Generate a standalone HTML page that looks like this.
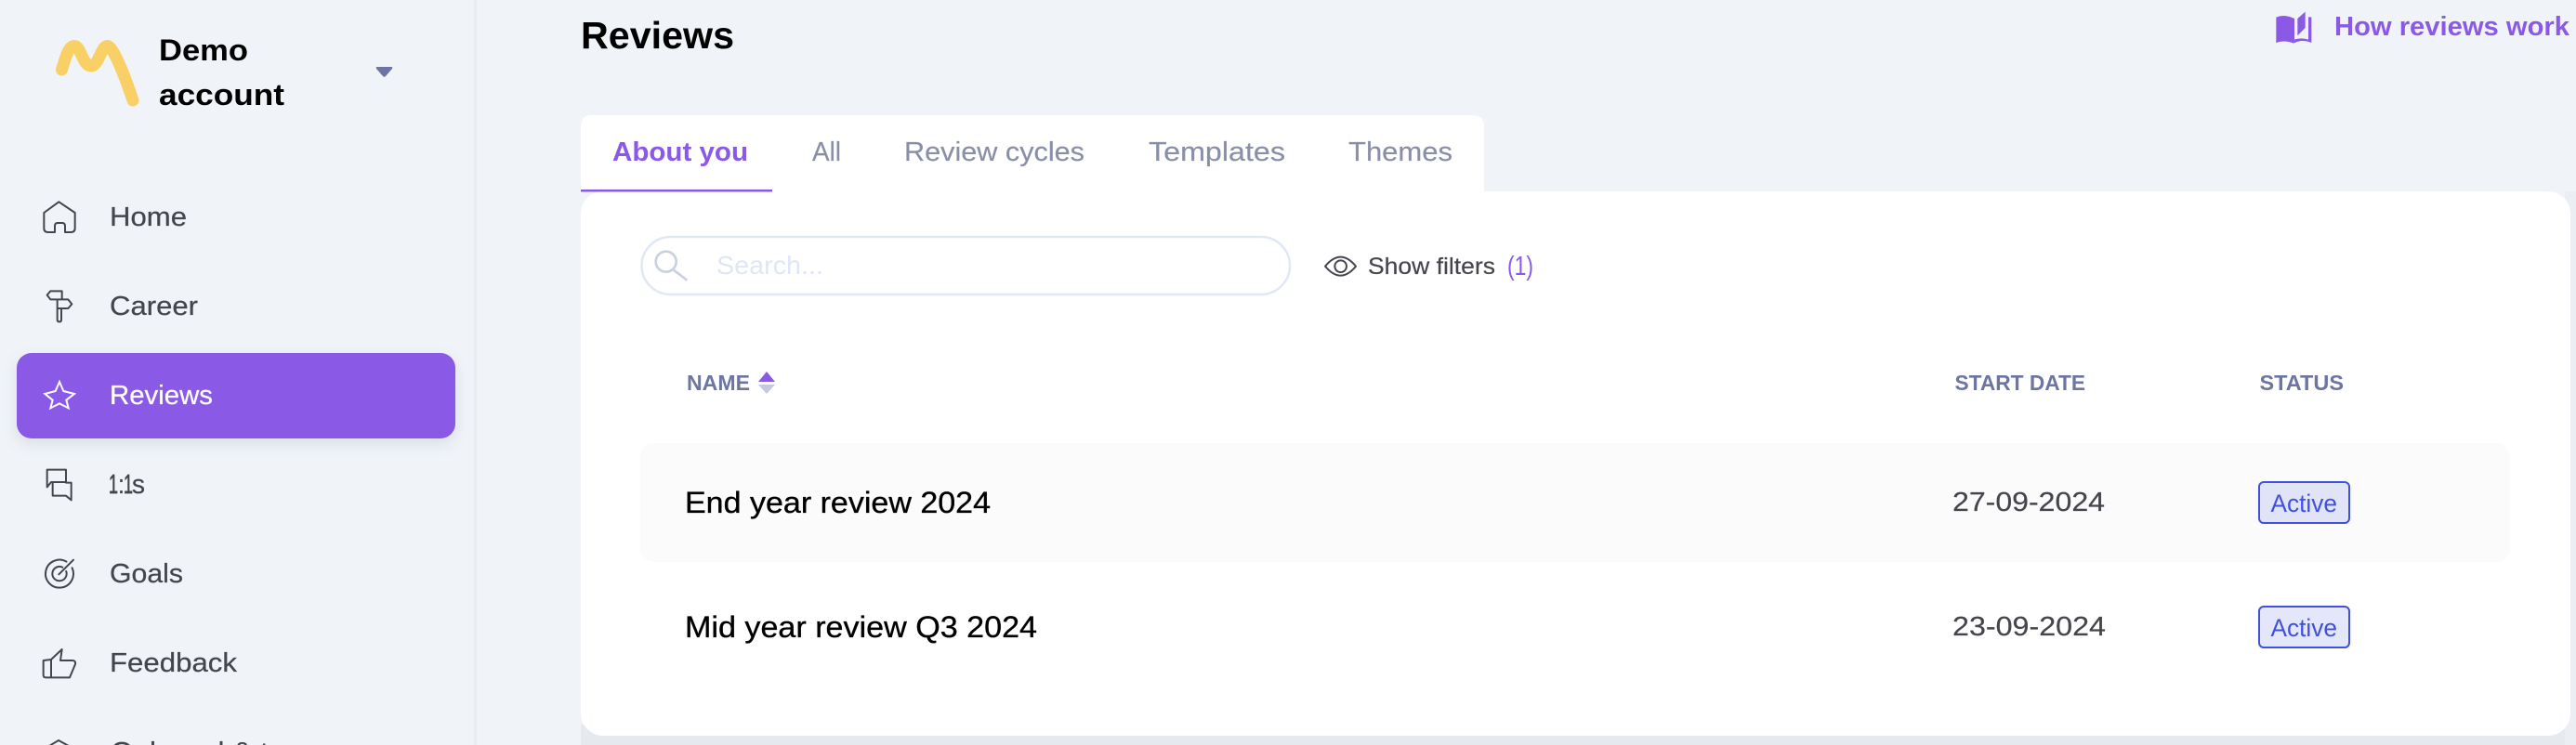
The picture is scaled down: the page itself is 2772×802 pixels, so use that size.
<!DOCTYPE html>
<html lang="en">
<head>
<meta charset="utf-8">
<title>Reviews</title>
<style>
html,body{margin:0;padding:0;background:#f0f4f8;width:2772px;height:802px;overflow:hidden}
svg{display:block;position:absolute;left:0;top:0}
text{font-family:"Liberation Sans",sans-serif}
.nav{font-size:29px;fill:#45464d;stroke:#45464d;stroke-width:.25px}
.tab{font-size:29px;fill:#8a8fa8;stroke:#8a8fa8;stroke-width:.2px}
.th{font-size:23px;font-weight:700;fill:#6c75a3}
.row{font-size:32px;fill:#000;stroke:#000;stroke-width:.35px}
.date{font-size:29px;fill:#45464d;stroke:#45464d;stroke-width:.2px}
.act{font-size:27px;fill:#3f51dd}
.ic{fill:none;stroke:#45464d;stroke-width:6;stroke-linejoin:round;stroke-linecap:round}
</style>
</head>
<body>
<svg width="2772" height="802" viewBox="0 0 2772 802" xmlns="http://www.w3.org/2000/svg">
  <rect width="2772" height="802" fill="#f0f4f8"/>

  <!-- sidebar -->
  <rect x="510" y="0" width="3" height="802" fill="#e8ecf0"/>
  <path d="M66.500 75C71 60 74 49.500 80 49.500C87 49.500 89 71 98 71C106 71 109 49.500 115.500 49.500C122 49.500 135 84 143 108" fill="none" stroke="#f9d065" stroke-width="13" stroke-linecap="round" stroke-linejoin="round"/>
  <text x="171" y="65" font-size="32" font-weight="700" fill="#000" textLength="96" lengthAdjust="spacingAndGlyphs">Demo</text>
  <text x="171" y="113" font-size="32" font-weight="700" fill="#000" textLength="135" lengthAdjust="spacingAndGlyphs">account</text>
  <path d="M406 72H421Q423 72 422 74L415 82Q413.500 83.500 412 82L405 74Q404 72 406 72Z" fill="#6c75a3"/>

  <rect x="18" y="380" width="472" height="92" rx="16" fill="#8a5ae6" style="filter:drop-shadow(0 6px 8px rgba(60,70,100,.12))"/>

  <g transform="translate(35 205) scale(.33333)">
    <path class="ic" d="M37 72L85 37L137 72V122Q137 135 124 135H105V115Q105 105 96 105H81Q72 105 72 115V135H50Q37 135 37 122Z"/>
  </g>
  <g transform="translate(35 205) scale(.33333)">
    <path class="ic" d="M95 352V325H58L47 338L58 352H115L127 367L115 381H80M80 352V418Q80 424 87 424Q93 424 93 418V381"/>
  </g>
  <g transform="scale(.33333) translate(0 1200)">
    <path d="M192 33L205 63L240 72L214 92L221 118L192 103L163 118L170 92L145 72L179 63Z" fill="none" stroke="#fff" stroke-width="6" stroke-linejoin="miter"/>
  </g>
  <g transform="translate(35 495) scale(.33333)">
    <path class="ic" d="M47 88V32H108V72H60L47 88M65 72V116H108L125 130V74H108"/>
    <path class="ic" d="M109.500 329A45 45 0 1 0 127.800 349M96.700 347A23 23 0 1 0 108.600 360M85 370L132 323"/>
    <path class="ic" d="M60 645L35 648V695Q35 703 42 703H120L138 660Q140 648 128 648H90L95 612ZM60 645V703"/>
  </g>
  <path d="M53 803L63 797L74 803" fill="none" stroke="#45464d" stroke-width="2"/>

  <text class="nav" x="118" y="243" textLength="83" lengthAdjust="spacingAndGlyphs">Home</text>
  <text class="nav" x="118" y="339" textLength="95" lengthAdjust="spacingAndGlyphs">Career</text>
  <text class="nav" x="118" y="435" textLength="111" lengthAdjust="spacingAndGlyphs" style="fill:#fff;stroke:#fff">Reviews</text>
  <text class="nav" x="117" y="531" textLength="10" lengthAdjust="spacingAndGlyphs" style="stroke-width:.7px">1</text>
  <text class="nav" x="127" y="531" textLength="7" lengthAdjust="spacingAndGlyphs">:</text>
  <text class="nav" x="133" y="531" textLength="10" lengthAdjust="spacingAndGlyphs" style="stroke-width:.7px">1</text>
  <text class="nav" x="142" y="531" textLength="14" lengthAdjust="spacingAndGlyphs">s</text>
  <text class="nav" x="118" y="627" textLength="79" lengthAdjust="spacingAndGlyphs">Goals</text>
  <text class="nav" x="118" y="723" textLength="137" lengthAdjust="spacingAndGlyphs">Feedback</text>
  <text class="nav" x="119" y="819" textLength="231" lengthAdjust="spacingAndGlyphs">Onboard &amp; team</text>

  <!-- header -->
  <text x="625" y="52" font-size="41" font-weight="700" fill="#000" textLength="165" lengthAdjust="spacingAndGlyphs">Reviews</text>
  <g transform="translate(2400 0) scale(.33333)" fill="#8a5ae6">
    <path d="M148 56Q175 44 207 60V130Q175 120 148 137Z"/>
    <path d="M217 60L242 38V90L217 115Z"/>
    <path d="M252 55H262V138Q230 125 205 140V128Q230 120 252 128Z"/>
    <path d="M148 130Q175 122 205 128V140Q175 128 148 138Z"/>
  </g>
  <text x="2512" y="38" font-size="29" font-weight="700" fill="#8a5ae6" textLength="253" lengthAdjust="spacingAndGlyphs">How reviews work</text>

  <!-- card strips -->
  <rect x="625" y="780" width="2147" height="22" fill="#e6eaef"/>
  <rect x="2760" y="206" width="12" height="596" fill="#ebeff3"/>

  <!-- tabs + card -->
  <path d="M625 206V136Q625 124 637 124H1585Q1597 124 1597 136V206Z" fill="#fff"/>
  <rect x="625" y="206" width="2141" height="586" rx="24" fill="#fff"/>
  <rect x="625" y="204" width="206" height="2.500" fill="#8a5ae6"/>
  <text x="659" y="173" font-size="29" font-weight="700" fill="#8a5ae6" textLength="146" lengthAdjust="spacingAndGlyphs">About you</text>
  <text class="tab" x="874" y="173" textLength="31" lengthAdjust="spacingAndGlyphs">All</text>
  <text class="tab" x="973" y="173" textLength="194" lengthAdjust="spacingAndGlyphs">Review cycles</text>
  <text class="tab" x="1236" y="173" textLength="147" lengthAdjust="spacingAndGlyphs">Templates</text>
  <text class="tab" x="1451" y="173" textLength="112" lengthAdjust="spacingAndGlyphs">Themes</text>

  <!-- search + filters -->
  <rect x="690.500" y="255" width="697.500" height="62" rx="31" fill="#fff" stroke="#e0e8f6" stroke-width="2.500"/>
  <g transform="translate(690 260) scale(.33333)" fill="none" stroke="#c9d1e0" stroke-width="8">
    <circle cx="80" cy="65" r="33"/>
    <path d="M105 92L148 125"/>
  </g>
  <text x="771" y="295" font-size="28" fill="#dfe6f5" textLength="115" lengthAdjust="spacingAndGlyphs">Search...</text>
  <g transform="translate(1415 265) scale(.33333)">
    <path class="ic" d="M33 65Q83 5 132 65Q83 125 33 65Z"/>
    <circle class="ic" cx="83" cy="65" r="19"/>
  </g>
  <text x="1472" y="295" font-size="25" fill="#45464d" stroke="#45464d" stroke-width=".2" textLength="137" lengthAdjust="spacingAndGlyphs">Show filters</text>
  <text x="1622" y="296" font-size="29" fill="#8a5ae6" textLength="28" lengthAdjust="spacingAndGlyphs">(1)</text>

  <!-- table header -->
  <text class="th" x="739" y="420" textLength="68" lengthAdjust="spacingAndGlyphs">NAME</text>
  <path d="M825 400L834 411H816Z" fill="#8a5ae6"/>
  <path d="M816 414H834L825 424Z" fill="#c5c9e0"/>
  <text class="th" x="2103.500" y="420" textLength="140.500" lengthAdjust="spacingAndGlyphs">START DATE</text>
  <text class="th" x="2431.500" y="420" textLength="90.500" lengthAdjust="spacingAndGlyphs">STATUS</text>

  <!-- rows -->
  <rect x="689" y="477" width="2012" height="128" rx="14" fill="#fbfbfb"/>
  <text class="row" x="737" y="552" textLength="329" lengthAdjust="spacingAndGlyphs">End year review 2024</text>
  <text class="date" x="2101" y="550" textLength="164" lengthAdjust="spacingAndGlyphs">27-09-2024</text>
  <rect x="2431" y="519" width="97" height="44" rx="5" fill="#e1e4f7" stroke="#3f51dd" stroke-width="2"/>
  <text class="act" x="2443.500" y="551" textLength="71.500" lengthAdjust="spacingAndGlyphs">Active</text>

  <text class="row" x="737" y="686" textLength="379" lengthAdjust="spacingAndGlyphs">Mid year review Q3 2024</text>
  <text class="date" x="2101" y="684" textLength="165" lengthAdjust="spacingAndGlyphs">23-09-2024</text>
  <rect x="2431" y="653" width="97" height="44" rx="5" fill="#e4e7f9" stroke="#3f51dd" stroke-width="2"/>
  <text class="act" x="2443.500" y="685" textLength="71.500" lengthAdjust="spacingAndGlyphs">Active</text>
</svg>
</body>
</html>
